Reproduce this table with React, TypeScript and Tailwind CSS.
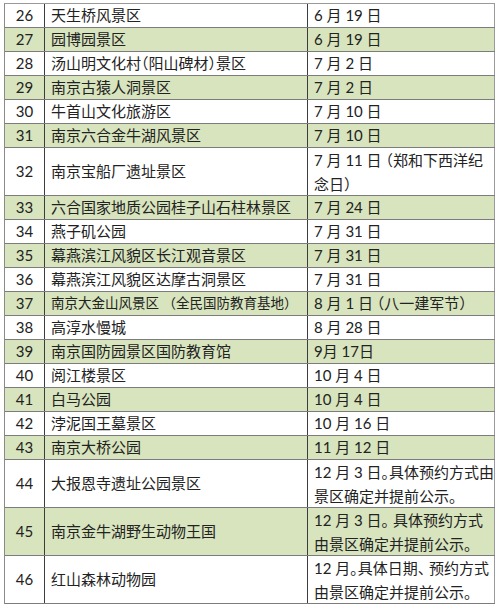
import React from "react";

type Row = { n: number; name: string; date: string[]; tall?: boolean; small?: boolean };

const rows: Row[] = [
  { n: 26, name: "天生桥风景区", date: ["6 月 19 日"] },
  { n: 27, name: "园博园景区", date: ["6 月 19 日"] },
  { n: 28, name: "汤山明文化村（阳山碑材）景区", date: ["7 月 2 日"] },
  { n: 29, name: "南京古猿人洞景区", date: ["7 月 2 日"] },
  { n: 30, name: "牛首山文化旅游区", date: ["7 月 10 日"] },
  { n: 31, name: "南京六合金牛湖风景区", date: ["7 月 10 日"] },
  { n: 32, name: "南京宝船厂遗址景区", date: ["7 月 11 日 （郑和下西洋纪", "念日）"], tall: true },
  { n: 33, name: "六合国家地质公园桂子山石柱林景区", date: ["7 月 24 日"] },
  { n: 34, name: "燕子矶公园", date: ["7 月 31 日"] },
  { n: 35, name: "幕燕滨江风貌区长江观音景区", date: ["7 月 31 日"] },
  { n: 36, name: "幕燕滨江风貌区达摩古洞景区", date: ["7 月 31 日"] },
  { n: 37, name: "南京大金山风景区 （全民国防教育基地）", date: ["8 月 1 日 （八一建军节）"], small: true },
  { n: 38, name: "高淳水慢城", date: ["8 月 28 日"] },
  { n: 39, name: "南京国防园景区国防教育馆", date: ["9月 17日"] },
  { n: 40, name: "阅江楼景区", date: ["10 月 4 日"] },
  { n: 41, name: "白马公园", date: ["10 月 4 日"] },
  { n: 42, name: "浡泥国王墓景区", date: ["10 月 16 日"] },
  { n: 43, name: "南京大桥公园", date: ["11 月 12 日"] },
  { n: 44, name: "大报恩寺遗址公园景区", date: ["12 月 3 日。具体预约方式由", "景区确定并提前公示。"], tall: true },
  { n: 45, name: "南京金牛湖野生动物王国", date: ["12 月 3 日。 具体预约方式", "由景区确定并提前公示。"], tall: true },
  { n: 46, name: "红山森林动物园", date: ["12 月。具体日期、 预约方式", "由景区确定并提前公示。"], tall: true },
];

export default function App() {
  return (
    <div
      className="w-[500px] h-[611px] bg-white overflow-hidden pt-[3px] pl-[4px]"
      style={{ fontFamily: 'Lato, "Noto Sans CJK SC", sans-serif' }}
    >
      <div className="w-[491px] border-t border-l border-t-[#9a9a9a] border-l-[#8a8a8a] text-[15px] text-[#222222] [font-feature-settings:'halt']">
        {rows.map((r) => (
          <div
            key={r.n}
            className={
              "flex border-b border-b-[#7c7c7c] " +
              (r.tall ? "h-[48px] " : "h-[24px] ") +
              (r.n % 2 === 1 ? "bg-[#d7e4bd]" : "bg-white")
            }
          >
            <div className="w-[40px] shrink-0 border-r border-r-[#3c3c3c] flex items-center justify-center leading-[23px]">
              {r.n}
            </div>
            <div
              className={
                "w-[263px] shrink-0 border-r border-r-[#3c3c3c] flex items-center pl-[6px] whitespace-pre leading-[23px] " +
                (r.small ? "text-[13.5px] [font-feature-settings:normal]" : "")
              }
            >
              {r.name}
            </div>
            <div className="w-[187px] shrink-0 border-r border-r-[#9a9a9a] flex flex-col justify-center pl-[6px] whitespace-pre leading-[23px] overflow-hidden">
              {r.date.map((d, i) => (
                <span key={i} className={r.tall ? "leading-[24px]" : ""}>
                  {d}
                </span>
              ))}
            </div>
          </div>
        ))}
      </div>
    </div>
  );
}
